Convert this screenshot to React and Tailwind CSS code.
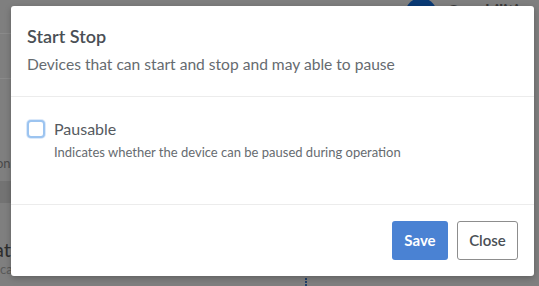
import React from 'react';

const font = { fontFamily: 'Lato, "Noto Sans", sans-serif' };

export default function App() {
  return (
    <div className="relative w-[539px] h-[286px] overflow-hidden bg-[#7f7f7f]" style={font}>
      {/* page behind the overlay */}
      <div className="absolute left-[405px] top-[-2px] flex items-start gap-[10px]">
        <div className="w-[32px] h-[32px] rounded-full bg-[#0a3a75]" />
        <div className="mt-[3px] text-[17px] leading-[20px] font-bold text-[#3a3a3a]">Capabiliti</div>
      </div>
      <div className="absolute left-[-6px] top-[33px] w-[17px] flex flex-col">
        <div className="h-px bg-[#8a8a8a]" />
        <div className="mt-[44px] h-px bg-[#8a8a8a]" />
        <div className="mt-[76px] pl-[2px] text-[13px] leading-[16px] text-[#4a4a4a]">on</div>
        <div className="mt-[10px] h-[22px] bg-[#737373]" />
        <div className="mt-[34px] text-[20px] leading-[24px] text-[#2e2e2e]">at</div>
        <div className="pl-[3px] text-[13px] leading-[16px] text-[#5a5a5a]">ica</div>
      </div>
      <div className="absolute left-[305px] top-[278px] h-[8px] border-l-2 border-dotted border-[#1f3f6a]" />

      <div className="relative z-10 pl-[11px] pt-[6px]">
        <div className="w-[523px] h-[270px] bg-white rounded-[3px] shadow-[0_2px_6px_rgba(0,0,0,0.25)] flex flex-col">
          <div className="px-[16px] pt-[19px] h-[91px] border-b border-[#ececec]">
            <div className="text-[18px] leading-[22px] font-semibold text-[#4a4f55]">Start Stop</div>
            <div className="mt-[7px] text-[15.6px] leading-[20px] text-[#666b70]">
              Devices that can start and stop and may able to pause
            </div>
          </div>
          <div className="px-[16px] pt-[22px] h-[108px] border-b border-[#ececec]">
            <div className="flex items-start gap-[9px]">
              <div className="mt-px w-[18px] h-[18px] rounded-[4px] border-2 border-[#9cc4f0] bg-white shadow-[0_0_0_1px_#dbe9fa]" />
              <div>
                <div className="text-[16px] leading-[20px] text-[#555a60]">Pausable</div>
                <div className="mt-[5px] text-[13px] leading-[16px] text-[#666b70]">
                  Indicates whether the device can be paused during operation
                </div>
              </div>
            </div>
          </div>
          <div className="flex-1 flex items-start justify-end gap-[9px] px-[16px] pt-[16px]">
            <button className="w-[56px] h-[39px] rounded-[3px] bg-[#4a82d3] text-white text-[15px] font-bold">Save</button>
            <button className="w-[61px] h-[39px] rounded-[3px] border border-[#8d8d8d] bg-white text-[#4a4f55] text-[15px] font-semibold">Close</button>
          </div>
        </div>
      </div>
    </div>
  );
}
